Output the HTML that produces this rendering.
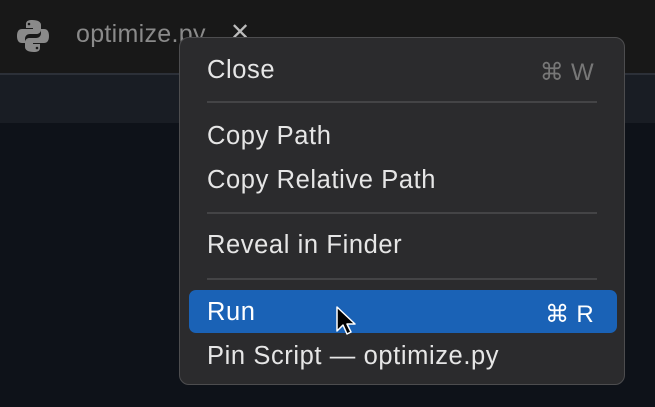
<!DOCTYPE html>
<html><head><style>
html,body{margin:0;padding:0;width:655px;height:407px;overflow:hidden;background:#0e1219;font-family:"Liberation Sans",sans-serif;}
.top{position:absolute;left:0;top:0;width:655px;height:73px;background:#181818;}
.line{position:absolute;left:0;top:73px;width:655px;height:2px;background:#2c3038;}
.strip{position:absolute;left:0;top:75px;width:655px;height:48px;background:#191d24;}
.tab{position:absolute;left:76px;top:20px;font-size:25px;letter-spacing:0.3px;color:#8a8a8a;}
.x{position:absolute;left:230px;top:18px;font-size:24px;color:#bbb;}
.menu{position:absolute;left:179px;top:37px;width:446px;height:348px;background:#2b2b2d;border:1px solid #4d4d4f;border-radius:10px;box-sizing:border-box;}
.it{position:absolute;left:27px;font-size:25.5px;letter-spacing:0.6px;color:#e6e6e6;}
.sc{position:absolute;right:30px;font-size:24px;letter-spacing:0.3px;color:#777;}
.sep{position:absolute;left:27px;right:27px;height:2px;background:#444446;}
.hl{position:absolute;left:9px;top:252px;width:428px;height:43px;background:#1a62b6;border-radius:7px;}
</style></head><body>
<div class="top"></div><div class="line"></div><div class="strip"></div>
<svg style="position:absolute;left:16px;top:19px" width="34" height="34" viewBox="0 0 34 34">
<path d="M16 1c-6 0-6 3-6 5v3h7v1H6c-3 0-5 2-5 7s2 7 5 7h3v-4c0-3 2-5 5-5h7c2 0 4-2 4-4V6c0-3-3-5-9-5z" fill="#8a8a8a"/>
<path d="M18 33c6 0 6-3 6-5v-3h-7v-1h11c3 0 5-2 5-7s-2-7-5-7h-3v4c0 3-2 5-5 5h-7c-2 0-4 2-4 4v5c0 3 3 5 9 5z" fill="#8a8a8a"/>
<circle cx="13" cy="5" r="1.3" fill="#181818"/><circle cx="21" cy="29" r="1.3" fill="#181818"/></svg>
<div class="tab">optimize.py</div>
<div class="x">✕</div>
<div class="menu">
<div class="it" style="top:18px">Close</div><div class="sc" style="top:20px">⌘ W</div>
<div class="sep" style="top:63px"></div>
<div class="it" style="top:84px">Copy Path</div>
<div class="it" style="top:128px">Copy Relative Path</div>
<div class="sep" style="top:174px"></div>
<div class="it" style="top:193px">Reveal in Finder</div>
<div class="sep" style="top:240px"></div>
<div class="hl"></div>
<div class="it" style="top:260px;color:#fff">Run</div><div class="sc" style="top:262px;color:#fff">⌘ R</div>
<div class="it" style="top:304px">Pin Script — optimize.py</div>
</div>
<svg style="position:absolute;left:335px;top:305px" width="24" height="34" viewBox="0 0 24 34">
<path d="M2 2v24l6-6 4 9 4-2-4-8h8z" fill="#000" stroke="#fff" stroke-width="1.5" stroke-linejoin="round"/></svg>
</body></html>
